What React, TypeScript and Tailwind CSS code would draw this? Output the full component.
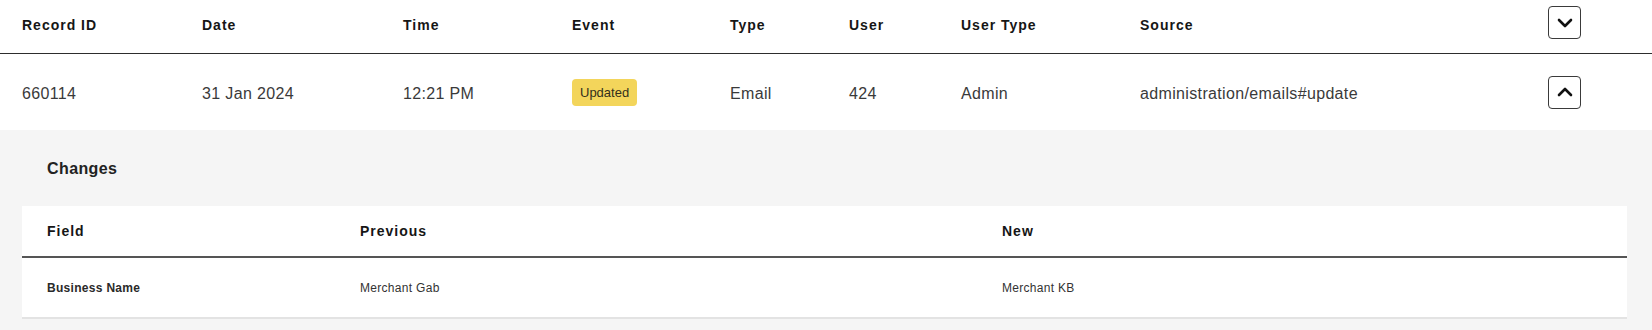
import React from "react";

const cols = "grid grid-cols-[180px_201px_169px_158px_119px_112px_179px_408px_33px] pl-[22px]";

function Chevron({ up }: { up?: boolean }) {
  return (
    <svg width="16" height="10" viewBox="0 0 16 10" fill="none">
      <polyline
        points={up ? "2,8 8,2 14,8" : "2,2 8,8 14,2"}
        stroke="#111"
        strokeWidth="2.6"
        strokeLinecap="round"
        strokeLinejoin="round"
      />
    </svg>
  );
}

function ToggleButton({ up }: { up?: boolean }) {
  return (
    <button className="w-[33px] h-[33px] flex items-center justify-center rounded-[4px] border border-[#3a3a3a] bg-white">
      <Chevron up={up} />
    </button>
  );
}

export default function App() {
  const headers = ["Record ID", "Date", "Time", "Event", "Type", "User", "User Type", "Source"];
  return (
    <div className="w-[1652px] bg-white font-['Liberation_Sans',Arial,sans-serif]">
      {/* Header row */}
      <div className={`${cols} h-[54px] border-b border-[#2d2d2d] items-start`}>
        {headers.map((h) => (
          <div key={h} className="pt-[15px] text-[14px] leading-[20px] font-bold tracking-[1px] text-[#161616]">
            {h}
          </div>
        ))}
        <div className="pt-[6px]">
          <ToggleButton />
        </div>
      </div>

      {/* Data row */}
      <div className={`${cols} h-[76px] items-center text-[16px] leading-[24px] tracking-[0.35px] text-[#3a3a3a]`}>
        <div className="pt-[3px]">660114</div>
        <div className="pt-[3px]">31 Jan 2024</div>
        <div className="pt-[3px]">12:21 PM</div>
        <div className="pt-[1px]">
          <span className="inline-flex items-center h-[27px] px-[8px] rounded-[4px] bg-[#f3d55b] text-[13px] tracking-normal text-[#33301c]">
            Updated
          </span>
        </div>
        <div className="pt-[3px]">Email</div>
        <div className="pt-[3px]">424</div>
        <div className="pt-[3px]">Admin</div>
        <div className="pt-[3px]">administration/emails#update</div>
        <div>
          <ToggleButton up />
        </div>
      </div>

      {/* Expanded details */}
      <div className="bg-[#f5f5f5] pt-[27px] pb-[24px] pl-[22px] pr-[25px]">
        <div className="pl-[25px] text-[16px] leading-[24px] font-semibold tracking-[0.4px] text-[#222]">Changes</div>
        <div className="mt-[25px] bg-white border-b-2 border-[#e3e3e3]">
          <div className="flex h-[52px] border-b-2 border-[#555] items-start">
            <div className="w-[313px] pl-[25px] pt-[15px] text-[14px] leading-[20px] font-bold tracking-[1px] text-[#161616]">Field</div>
            <div className="w-[642px] pl-[25px] pt-[15px] text-[14px] leading-[20px] font-bold tracking-[1px] text-[#161616]">Previous</div>
            <div className="flex-1 pl-[25px] pt-[15px] text-[14px] leading-[20px] font-bold tracking-[1px] text-[#161616]">New</div>
          </div>
          <div className="flex h-[59px] items-center text-[12px] leading-[16px] tracking-[0.3px] text-[#333]">
            <div className="w-[313px] pl-[25px] font-bold text-[#2a2a2a]">Business Name</div>
            <div className="w-[642px] pl-[25px]">Merchant Gab</div>
            <div className="flex-1 pl-[25px]">Merchant KB</div>
          </div>
        </div>
      </div>
    </div>
  );
}
